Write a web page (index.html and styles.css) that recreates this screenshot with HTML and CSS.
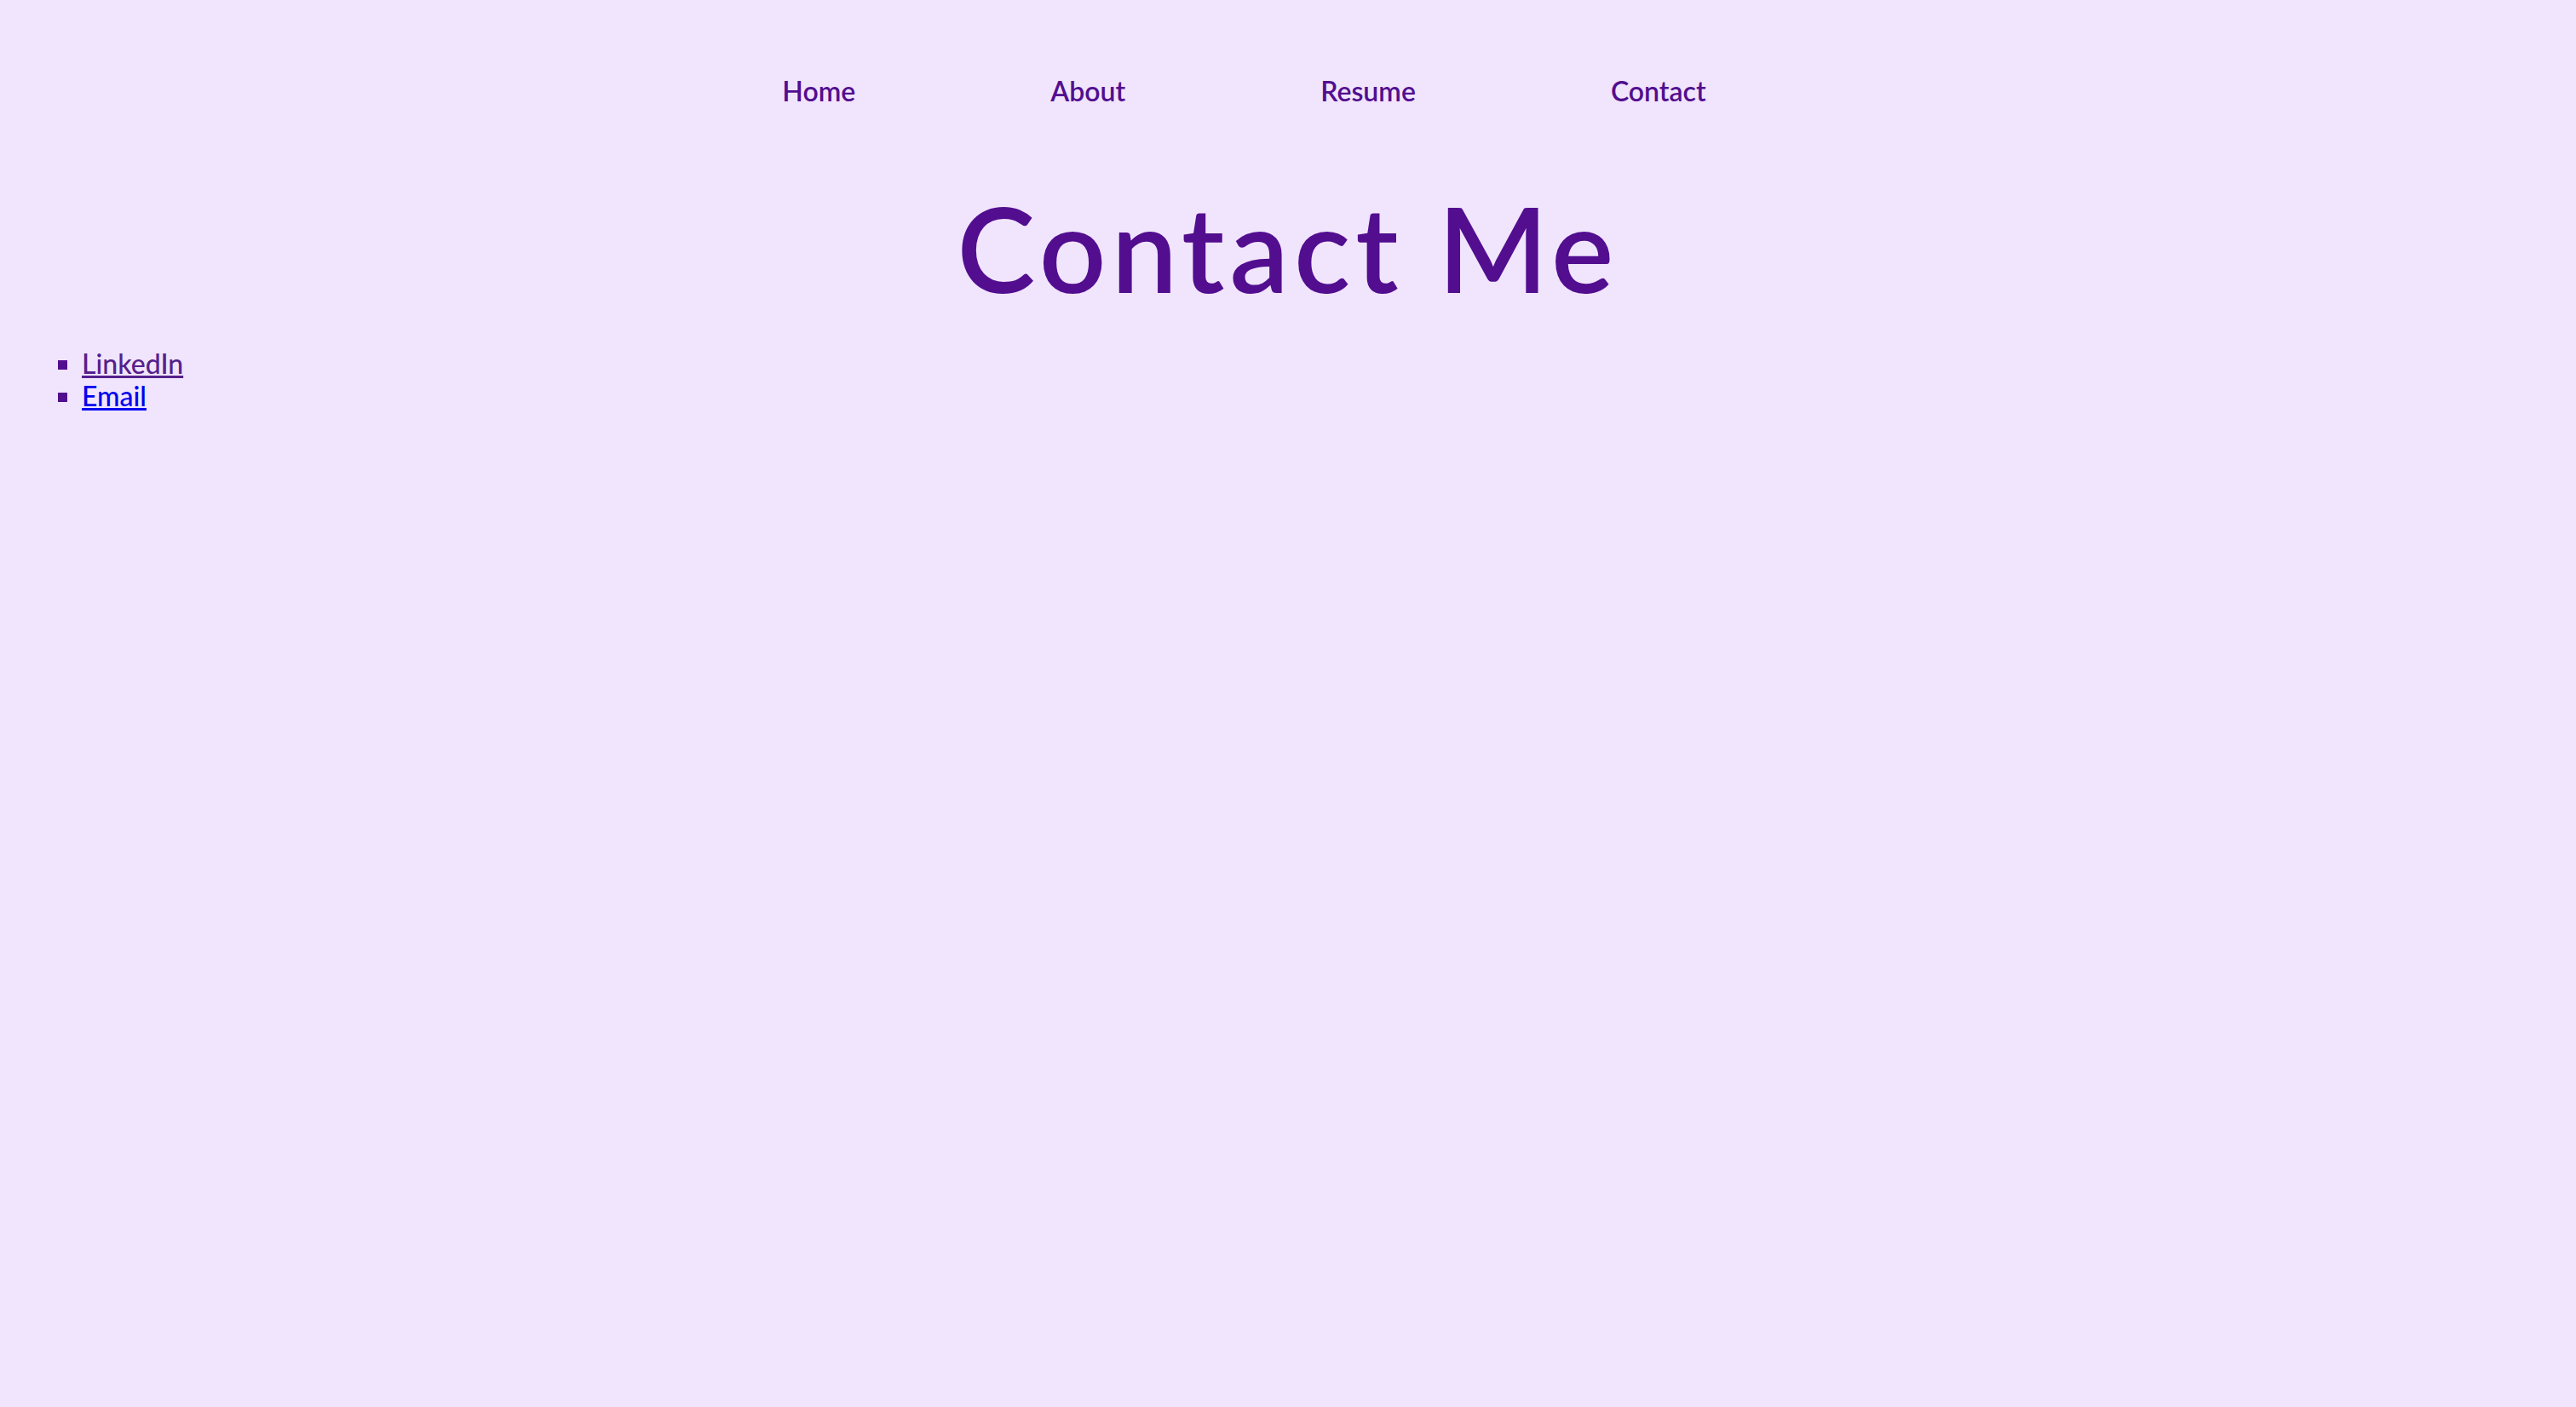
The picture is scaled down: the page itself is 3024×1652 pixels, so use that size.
FILE: index.html
```html
<!DOCTYPE html>
<html lang="en">
<head>
<meta charset="utf-8">
<title>Contact Me</title>
<link rel="stylesheet" href="styles.css">
</head>
<body>
<nav class="site-nav">
  <ul class="nav-list">
    <li><a class="nav-link" href="#">Home</a></li>
    <li><a class="nav-link" href="#">About</a></li>
    <li><a class="nav-link" href="#">Resume</a></li>
    <li><a class="nav-link" href="#">Contact</a></li>
  </ul>
</nav>
<h1 class="page-title">Contact Me</h1>
<ul class="contact-list">
  <li><a class="link-visited" href="#">LinkedIn</a></li>
  <li><a class="link-email" href="#">Email</a></li>
</ul>
</body>
</html>
```
FILE: styles.css
```css
html, body {
  background: #f0e5fd;
}
body {
  margin: 16px;
  font-family: Lato, "Open Sans", sans-serif;
  color: #520e8f;
}
.site-nav {
  padding-top: 72px;
}
.nav-list {
  list-style: none;
  margin: 0;
  padding: 0 103px 0 0;
  display: flex;
  justify-content: center;
  gap: 229px;
}
.nav-link {
  font-size: 32px;
  line-height: 38px;
  font-weight: 600;
  color: #520e8f;
  text-decoration: none;
}
.page-title {
  margin: 80px 0 32px;
  text-align: center;
  font-size: 138px;
  line-height: 170px;
  font-weight: 600;
  letter-spacing: 6px;
  color: #520e8f;
}
.contact-list {
  list-style: square;
  margin: 0;
  padding-left: 80px;
  font-size: 32px;
  line-height: 38px;
  font-weight: 500;
  color: #520e8f;
}
.link-visited {
  color: #55208c;
}
.link-email {
  color: #0000ee;
}
```
